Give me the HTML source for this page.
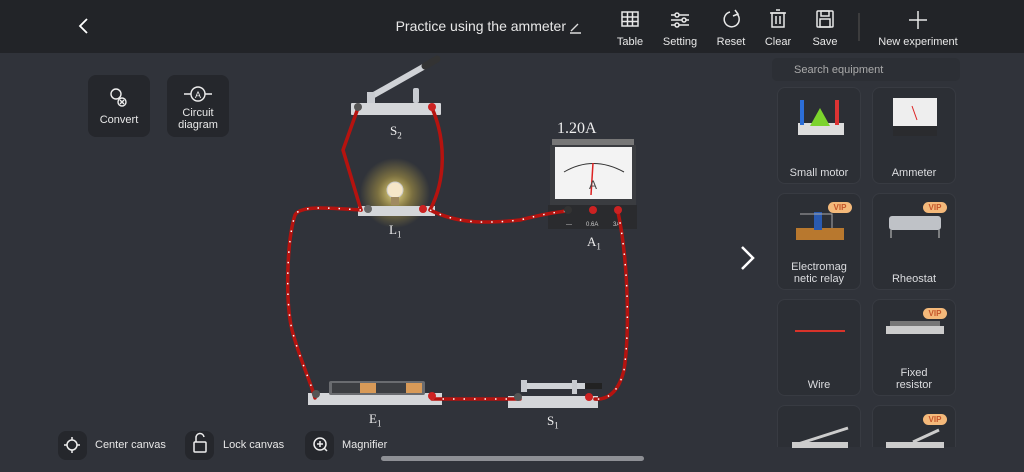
<!DOCTYPE html>
<html><head><style>
*{margin:0;padding:0;box-sizing:border-box}
body{width:1024px;height:472px;overflow:hidden;background:#30333a;font-family:"Liberation Sans",sans-serif;color:#e6e7ea;position:relative}
.top{position:absolute;left:0;top:0;width:1024px;height:53px;background:#222428}
.t{position:absolute;font-size:11px;color:#e8e8e8;text-align:center}
.btn{position:absolute;background:#25272c;border-radius:8px}
.card{position:absolute;width:84px;background:#2c2f35;border:1px solid #383b42;border-radius:8px;font-size:11px;color:#dcdde0;text-align:center}
.card span{position:absolute;left:0;right:0;bottom:4px;line-height:12px}
.vip{position:absolute;right:8px;top:8px;width:24px;height:11px;background:#f4b97a;border-radius:6px;color:#c4552a;font-size:8px;font-weight:bold;line-height:11px;text-align:center}
.lab{position:absolute;font-family:"Liberation Serif",serif;font-size:13px;color:#eee}
</style></head><body>
<div class="top"></div>
<svg style="position:absolute;left:0;top:0" width="1024" height="472">
<path d="M87 19 L80 26 L87 33" stroke="#fff" stroke-width="1.8" fill="none"/>
<path d="M571 31 L578 24 M570 33 L581 33" stroke="#ddd" stroke-width="1.4"/>
<g stroke="#e8e8e8" stroke-width="1.5" fill="none">
<rect x="622" y="12" width="16" height="14"/><path d="M622 17h16M622 21.5h16M627.5 12v14M632.5 12v14"/>
<path d="M671 15h18M671 20h18M671 25h18"/><circle cx="677" cy="15" r="2" fill="#222428"/><circle cx="684" cy="20" r="2" fill="#222428"/><circle cx="677" cy="25" r="2" fill="#222428"/>
<path d="M737 14 A7.5 7.5 0 1 1 730 12"/><path d="M735 10 L738 14 L733 16"/>
<rect x="772" y="13" width="12" height="14"/><path d="M770 13h16M776 10h4M776 16v8M780 16v8"/>
<rect x="817" y="11" width="16" height="16" rx="1"/><rect x="821" y="11" width="8" height="5"/><rect x="820" y="19" width="10" height="8"/>
<path d="M918 11v18M909 20h18"/>
<path d="M859 13v28" stroke="#444"/>
<circle cx="783" cy="69" r="5"/><path d="M786.5 72.5 L790 76"/>
</g>
<defs><radialGradient id="g"><stop offset="0" stop-color="#fff2a0" stop-opacity=".9"/><stop offset=".5" stop-color="#e8c84a" stop-opacity=".4"/><stop offset="1" stop-color="#e8c84a" stop-opacity="0"/></radialGradient></defs>
<circle cx="395" cy="193" r="35" fill="url(#g)"/>
<path d="M372 96 L432 62" stroke="#cfd2d6" stroke-width="6" stroke-linecap="round"/>
<path d="M425 66 L437 59" stroke="#333" stroke-width="7" stroke-linecap="round"/>
<rect x="367" y="92" width="8" height="13" fill="#c8cbd0"/><rect x="413" y="88" width="6" height="15" rx="2" fill="#c8cbd0"/>
<rect x="351" y="103" width="90" height="12" rx="1" fill="#d4d6d9"/>
<rect x="358" y="206" width="77" height="10" fill="#d4d6d9"/>
<circle cx="395" cy="190" r="8" fill="#f6e7c9" stroke="#ccc"/><rect x="391" y="197" width="8" height="8" fill="#a08a60"/>
<rect x="552" y="139" width="82" height="6" fill="#777"/>
<rect x="550" y="145" width="86" height="60" fill="#3a3c40"/>
<rect x="555" y="147" width="77" height="52" fill="#f3f3f3"/>
<path d="M564 172 Q593 155 624 172" stroke="#333" fill="none"/>
<path d="M593 163 L591 195" stroke="#d22" stroke-width="1.5"/>
<text x="589" y="189" font-size="12" fill="#444">A</text>
<rect x="548" y="205" width="89" height="24" fill="#2a2b2e"/>
<text x="566" y="226" font-size="6" fill="#ccc">—</text><text x="586" y="226" font-size="6" fill="#ccc">0.6A</text><text x="613" y="226" font-size="6" fill="#ccc">3A</text>
<rect x="308" y="393" width="134" height="12" fill="#d4d6d9"/>
<rect x="329" y="381" width="96" height="14" rx="2" fill="#6a6c70"/>
<rect x="332" y="383" width="90" height="10" fill="#3c3e42"/>
<rect x="360" y="383" width="16" height="10" fill="#d89a58"/><rect x="406" y="383" width="16" height="10" fill="#d89a58"/>
<rect x="508" y="396" width="90" height="12" fill="#d4d6d9"/>
<path d="M526 386 L590 386" stroke="#cfd2d6" stroke-width="6"/><path d="M585 386 L602 386" stroke="#222" stroke-width="6"/>
<rect x="521" y="380" width="6" height="12" fill="#c8cbd0"/><rect x="572" y="380" width="5" height="14" fill="#c8cbd0"/>
<g stroke="#b5130f" stroke-width="3.5" fill="none" stroke-linecap="round">
<path d="M358 108 L343 150 L361 210"/>
<path d="M432 108 C446 140 446 180 430 210"/>
<path id="w1" d="M361 210 C330 208 300 205 295 215 C287 240 285 300 292 330 C300 360 310 380 315 398"/>
<path id="w2" d="M432 399 L520 399"/>
<path id="w3" d="M430 210 C460 225 490 223 520 220 C540 215 555 212 568 211"/>
<path id="w4" d="M618 212 C628 260 630 330 624 370 C618 395 605 400 595 399"/>
</g>
<g stroke="#fff" stroke-width="1.5" fill="none" stroke-dasharray="1.5 9">
<use href="#w1"/><use href="#w2"/><use href="#w3"/><use href="#w4"/>
</g>
<g>
<circle cx="358" cy="107" r="4" fill="#555"/><circle cx="432" cy="107" r="4" fill="#c22"/>
<circle cx="368" cy="209" r="4" fill="#666"/><circle cx="423" cy="209" r="4" fill="#c22"/>
<circle cx="568" cy="210" r="4" fill="#333"/><circle cx="593" cy="210" r="4" fill="#c22"/><circle cx="618" cy="210" r="4" fill="#c22"/>
<circle cx="316" cy="394" r="4" fill="#555"/><circle cx="432" cy="396" r="4" fill="#c22"/>
<circle cx="518" cy="397" r="4" fill="#555"/><circle cx="589" cy="397" r="4" fill="#c22"/>
</g>
<rect x="381" y="456" width="263" height="5" rx="2.5" fill="#8e9095"/>
</svg>
<div class="t" style="left:380px;top:18px;width:186px;font-size:14px;text-align:right">Practice using the ammeter</div>
<div class="t" style="left:610px;top:36px;width:40px">Table</div>
<div class="t" style="left:660px;top:36px;width:40px">Setting</div>
<div class="t" style="left:711px;top:36px;width:40px">Reset</div>
<div class="t" style="left:758px;top:36px;width:40px">Clear</div>
<div class="t" style="left:805px;top:36px;width:40px">Save</div>
<div class="t" style="left:870px;top:36px;width:96px">New experiment</div>
<div class="btn" style="left:88px;top:75px;width:62px;height:62px"></div>
<div class="btn" style="left:167px;top:75px;width:62px;height:62px"></div>
<svg style="position:absolute;left:0;top:0" width="300" height="140"><g stroke="#eee" stroke-width="1.4" fill="none"><circle cx="116" cy="94" r="5"/><circle cx="122" cy="102" r="4"/><path d="M120 100l4 4M124 100l-4 4"/><circle cx="198" cy="94" r="7"/><path d="M184 94h7M205 94h7"/></g><text x="195" y="98" font-size="9" fill="#eee" font-family="Liberation Sans">A</text></svg>
<div class="t" style="left:88px;top:114px;width:62px">Convert</div>
<div class="t" style="left:167px;top:107px;width:62px;line-height:12px">Circuit<br>diagram</div>
<div class="lab" style="left:390px;top:123px">S<sub style="font-size:9px">2</sub></div>
<div class="lab" style="left:389px;top:222px">L<sub style="font-size:9px">1</sub></div>
<div class="lab" style="left:557px;top:120px;font-size:16px">1.20A</div>
<div class="lab" style="left:587px;top:234px">A<sub style="font-size:9px">1</sub></div>
<div class="lab" style="left:369px;top:411px">E<sub style="font-size:9px">1</sub></div>
<div class="lab" style="left:547px;top:413px">S<sub style="font-size:9px">1</sub></div>
<svg style="position:absolute;left:735px;top:244px" width="24" height="30"><path d="M7 3 L18 14 L7 25" stroke="#fff" stroke-width="2.5" fill="none"/></svg>
<div style="position:absolute;left:772px;top:58px;width:188px;height:23px;background:#2c2f35;border-radius:5px"></div>
<div class="t" style="left:794px;top:64px;color:#aaa">Search equipment</div>
<div class="card" style="left:777px;top:87px;height:97px"><span>Small motor</span>
<svg width="84" height="60"><rect x="20" y="35" width="46" height="12" fill="#ddd"/><rect x="22" y="12" width="4" height="25" fill="#2c6ed8"/><rect x="57" y="12" width="4" height="25" fill="#d33"/><path d="M42 20 L32 38 L52 38 Z" fill="#7bd32c"/></svg></div>
<div class="card" style="left:872px;top:87px;height:97px"><span>Ammeter</span>
<svg width="84" height="60"><rect x="20" y="10" width="44" height="34" fill="#eee"/><rect x="20" y="38" width="44" height="10" fill="#2a2b2e"/><path d="M39 18 L44 32" stroke="#d22"/></svg></div>
<div class="card" style="left:777px;top:193px;height:97px"><span>Electromag<br>netic relay</span><div class="vip">VIP</div>
<svg width="84" height="60"><rect x="18" y="34" width="48" height="12" fill="#b8782e"/><rect x="36" y="18" width="8" height="18" fill="#2a5ab0"/><path d="M22 20h32v14" stroke="#aaa" fill="none"/></svg></div>
<div class="card" style="left:872px;top:193px;height:97px"><span>Rheostat</span><div class="vip">VIP</div>
<svg width="84" height="60"><rect x="16" y="22" width="52" height="14" rx="3" fill="#bfc2c7"/><path d="M18 36v8M66 36v8" stroke="#ccc"/></svg></div>
<div class="card" style="left:777px;top:299px;height:97px"><span>Wire</span>
<svg width="84" height="60"><path d="M17 31h50" stroke="#d8332a" stroke-width="2"/></svg></div>
<div class="card" style="left:872px;top:299px;height:97px"><span>Fixed<br>resistor</span><div class="vip">VIP</div>
<svg width="84" height="60"><rect x="13" y="26" width="58" height="8" fill="#ccc"/><rect x="17" y="21" width="50" height="5" fill="#777"/></svg></div>
<div class="card" style="left:777px;top:405px;height:42px;border-bottom:none;border-radius:8px 8px 0 0">
<svg width="84" height="42"><path d="M20 38 L70 22" stroke="#ccc" stroke-width="3"/><rect x="14" y="36" width="56" height="6" fill="#ccc"/></svg></div>
<div class="card" style="left:872px;top:405px;height:42px;border-bottom:none;border-radius:8px 8px 0 0"><div class="vip">VIP</div>
<svg width="84" height="42"><path d="M40 36 L66 24" stroke="#ccc" stroke-width="3"/><rect x="13" y="36" width="58" height="6" fill="#ccc"/></svg></div>
<div class="btn" style="left:58px;top:431px;width:29px;height:29px"></div>
<div class="btn" style="left:185px;top:431px;width:29px;height:29px"></div>
<div class="btn" style="left:305px;top:431px;width:29px;height:29px"></div>
<svg style="position:absolute;left:0;top:0" width="400" height="472"><g stroke="#eee" stroke-width="1.5" fill="none">
<circle cx="72" cy="445" r="5"/><path d="M72 437v3M72 450v3M64 445h3M77 445h3"/>
<rect x="194" y="442" width="12" height="10" rx="1"/><path d="M196 442 v-4 a4 4 0 0 1 8 -1"/>
<circle cx="320" cy="444" r="6"/><path d="M317 444h6M320 441v6M324 448l3 3"/></g></svg>
<div class="t" style="left:95px;top:439px">Center canvas</div>
<div class="t" style="left:223px;top:439px">Lock canvas</div>
<div class="t" style="left:342px;top:439px">Magnifier</div>
</body></html>
